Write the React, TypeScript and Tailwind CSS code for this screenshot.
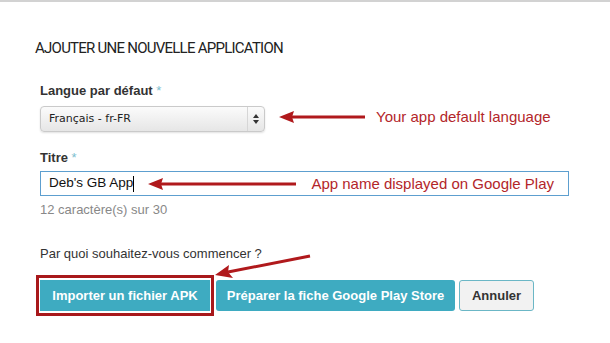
import React from "react";

const RED = "#b0191c";

function LeftArrow({ width }: { width: number }) {
  return (
    <svg width={width} height={14} viewBox={`0 0 ${width} 14`} className="shrink-0 block">
      <line x1={12} y1={7} x2={width} y2={7} stroke={RED} strokeWidth={3} />
      <polygon points={`0,7 15,1 13,7 15,13`} fill={RED} />
    </svg>
  );
}

export default function App() {
  return (
    <div className="relative w-[610px] h-[343px] overflow-hidden bg-white border-t-2 border-[#d2d2d2] font-['Liberation_Sans',Arial,sans-serif] text-[#333]">
      <div className="pl-[35px] pt-[36px] text-[15px] leading-[20px] font-['Roboto',sans-serif] tracking-[-0.75px] text-[#222]">
        AJOUTER UNE NOUVELLE APPLICATION
      </div>

      <div className="pl-[40px]">
        <div className="mt-[25px] text-[13px] leading-[16px] font-bold text-[#333]">
          Langue par défaut <span className="text-[#7cc0cf] font-normal">*</span>
        </div>

        <div className="mt-[7px] flex items-center">
          <div className="w-[225px] h-[26px] rounded-[4px] border border-[#cacaca] bg-gradient-to-b from-[#fbfbfb] to-[#e6e6e6] shadow-[0_1px_2px_rgba(0,0,0,0.12)] flex items-center">
            <span className="flex-1 pl-[8px] text-[11px] font-['DejaVu_Sans',sans-serif] text-[#222]">
              Français - fr-FR
            </span>
            <div className="w-[17px] h-full border-l border-[#d6d6d6] flex items-center justify-center">
              <svg width="6" height="10" viewBox="0 0 6 10">
                <polygon points="0,4 6,4 3,0" fill="#333" />
                <polygon points="0,6 6,6 3,10" fill="#333" />
              </svg>
            </div>
          </div>
          <div className="ml-[14px] -mt-[4px]">
            <LeftArrow width={86} />
          </div>
          <span className="ml-[11px] -mt-[4px] text-[15px] leading-[18px] text-[#b3262a]">
            Your app default language
          </span>
        </div>

        <div className="mt-[18px] text-[13px] leading-[16px] font-bold text-[#333]">
          Titre <span className="text-[#7cc0cf] font-normal">*</span>
        </div>

        <div className="mt-[5px] w-[529px] h-[25px] border border-[#5d9fcf] flex items-center">
          <span className="pl-[8px] text-[13.5px] text-[#111]">Deb's GB App</span>
          <span className="w-[1px] h-[16px] bg-black" />
          <div className="ml-[14px]">
            <LeftArrow width={148} />
          </div>
          <span className="ml-[15px] text-[15px] leading-[18px] text-[#b3262a]">
            App name displayed on Google Play
          </span>
        </div>

        <div className="mt-[6px] text-[13px] leading-[16px] text-[#888]">12 caractère(s) sur 30</div>

        <div className="mt-[28px] text-[13px] leading-[16px] text-[#333]">Par quoi souhaitez-vous commencer ?</div>
      </div>

      <div className="mt-[13px] pl-[36px] flex items-center">
        <div className="border-[3px] border-[#a8181b] px-[1px] py-[2px] bg-white">
          <button className="w-[170px] h-[31px] bg-[#3eabc1] text-white text-[13px] font-bold">
            Importer un fichier APK
          </button>
        </div>
        <button className="ml-[2px] w-[239px] h-[31px] rounded-[3px] bg-[#3eabc1] text-white text-[13px] font-bold">
          Préparer la fiche Google Play Store
        </button>
        <button className="ml-[4px] w-[75px] h-[31px] rounded-[3px] bg-[#f2f2f2] border border-[#6bb7c6] text-[#333] text-[13px] font-bold">
          Annuler
        </button>
      </div>

      <svg className="absolute left-0 top-0 pointer-events-none" width="610" height="343" viewBox="0 0 610 343">
        <line x1="310" y1="254" x2="228" y2="270" stroke={RED} strokeWidth="3" />
        <polygon points="215,273 229,263 228,270 233,276" fill={RED} />
      </svg>
    </div>
  );
}
